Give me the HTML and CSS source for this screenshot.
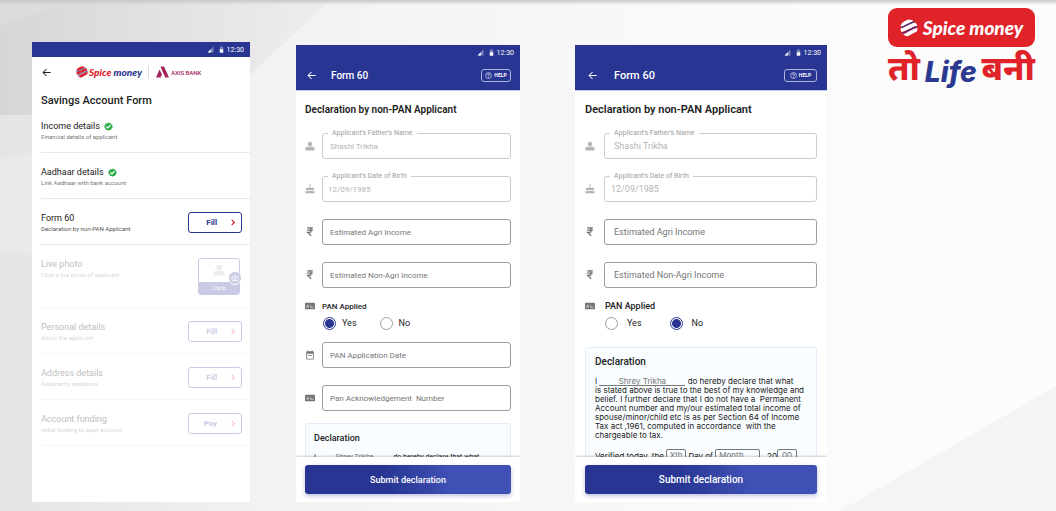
FILE: index.html
```html
<!DOCTYPE html>
<html lang="en">
<head>
    <meta charset="UTF-8">
    <meta name="viewport" content="width=device-width, initial-scale=1.0">
    <title>Spice Money - Savings Account Form</title>
    <link rel="stylesheet" href="styles.css">
</head>
<body>
    <!-- Shared icons -->
    <svg class="sprite" aria-hidden="true">
        <clipPath id="ball"><circle cx="12" cy="12" r="11.500"/></clipPath>
        <symbol id="back" viewBox="0 0 24 24"><path d="M21 11H6.800l6-6L11.400 3.600 3 12l8.400 8.400 1.400-1.400-6-6H21z"/></symbol>
        <symbol id="signal" viewBox="0 0 24 24"><path d="M2 22h20V2z" opacity=".4"/><path d="M2 22h11V11z"/></symbol>
        <symbol id="battery" viewBox="0 0 14 24"><path d="M4 1h6v3h3v7H1V4h3z" opacity=".4"/><path d="M1 11h12v12H1z"/></symbol>
        <symbol id="check" viewBox="0 0 24 24"><path fill="#2fae4a" d="M12 1l3 2 3.600 0 1.400 3.400 3 2-.8 3.600.8 3.600-3 2-1.400 3.400H15l-3 2-3-2H5.400L4 17.600l-3-2L1.800 12 1 8.400l3-2L5.400 3H9z"/><path fill="none" stroke="#fff" stroke-width="3" d="M6.500 12l4 4 7-7.500"/></symbol>
        <symbol id="chevron" viewBox="0 0 12 20"><path fill="none" stroke="currentColor" stroke-width="3.500" d="M2 2l8 8-8 8"/></symbol>
        <symbol id="person" viewBox="0 0 24 24"><circle cx="12" cy="7" r="5.500"/><path d="M1 23v-5c0-3 3-4.500 6-4.500h10c3 0 6 1.500 6 4.500v5z"/></symbol>
        <symbol id="cake" viewBox="0 0 24 24"><path d="M12 6c1.110 0 2-.9 2-2 0-.38-.1-.73-.29-1.030L12 0l-1.710 2.970c-.19.3-.29.65-.29 1.030 0 1.100.9 2 2 2zM18 9h-5V7h-2v2H6c-2 0-4 1.300-4 3v2c2 2 3.500 1 5-.5 2 2 3.500 2 5 0 2 2 3.500 2 5 0 1.500 1.500 3 2.500 5 .5v-2c0-1.700-2-3-4-3zM1 17v5h22v-5c-2.500 1-4.500.5-6-1-2 1.500-3.500 1.500-5 0-2 1.500-3.500 1.500-5 0-1.500 1.500-3.500 2-6 1z"/></symbol>
        <symbol id="rupee" viewBox="0 0 16 24"><path fill="none" stroke="currentColor" stroke-width="2.800" d="M1 2h14M1 7.500h14M1 2h4c8 0 8 11 0 11H2l9 8"/></symbol>
        <symbol id="idcard" viewBox="0 0 30 22"><rect y="1" width="30" height="20" rx="2"/><path fill="#fff" d="M4 16l3-9h2l3 9h-2l-1-2H7l-1 2zM15 7h2v9h-2zM18 13h3v3h-3zM22 13h4v3h-4z" opacity=".7"/></symbol>
        <symbol id="calendar" viewBox="0 0 24 24"><path d="M19 3h-1V1h-2v2H8V1H6v2H5c-1.100 0-2 .9-2 2v16c0 1.100.9 2 2 2h14c1.100 0 2-.9 2-2V5c0-1.100-.9-2-2-2zm0 18H5V9h14zM7 12h10v2H7z"/></symbol>
        <symbol id="help" viewBox="0 0 24 24"><circle cx="12" cy="12" r="10" fill="none" stroke="currentColor" stroke-width="2"/><path fill="none" stroke="currentColor" stroke-width="2.400" d="M8.500 10c0-5 7-4.500 7-.5 0 2.500-3.500 2.500-3.500 5.500M12 16.500V19"/></symbol>
        <symbol id="camera" viewBox="0 0 24 24"><path fill="none" stroke="currentColor" stroke-width="2.500" d="M3 7h4l2-3h6l2 3h4v13H3z"/><circle cx="12" cy="13" r="3.500" fill="none" stroke="currentColor" stroke-width="2.500"/></symbol>
        <symbol id="spice" viewBox="0 0 24 24">
            <g clip-path="url(#ball)" fill="none" stroke-width="5">
                <path stroke="currentColor" d="M-2 8C8 8 12-1 24-1M-2 15.500C9 15.500 14 6 26 6M0 23.500C11 23.500 15 14 26 14"/>
                <path class="stripe" stroke-width="1.600" d="M-2 11.500C8 11.500 13 2.500 26 2.500M-2 19.500C10 19.500 15 10 26 10"/>
            </g>
        </symbol>
        <symbol id="axis" viewBox="0 0 26 24"><path d="M9 1h7l10 22h-8z"/><path d="M7 7l5 10-3 6H0z"/><path d="M11 19c1-2 3-3 5-2l2 6c-2-3-4-4-7-4z" fill="#fff"/></symbol>
    </svg>
    <svg class="backdrop" viewBox="0 0 1056 511" preserveAspectRatio="none" aria-hidden="true">
        <defs>
            <linearGradient id="base" x1="0" y1="0" x2="1" y2="0">
                <stop offset="0" stop-color="#e4e4e4"/>
                <stop offset=".25" stop-color="#f2f2f2"/>
                <stop offset=".7" stop-color="#fafafa"/>
                <stop offset="1" stop-color="#fcfcfc"/>
            </linearGradient>
            <linearGradient id="top" x1="0" y1="0" x2="0" y2="1">
                <stop offset="0" stop-color="#c8c8c8"/>
                <stop offset="1" stop-color="#c8c8c8" stop-opacity="0"/>
            </linearGradient>
            <linearGradient id="corner" x1="0" y1="0" x2="1" y2="0">
                <stop offset="0" stop-color="#d6d6d6"/>
                <stop offset="1" stop-color="#eeeeee"/>
            </linearGradient>
        </defs>
        <rect width="1056" height="511" fill="url(#base)"/>
        <path fill="url(#corner)" d="M0 0h330L250 75 150 115H0z"/>
        <path fill="#dddddd" d="M0 0h78L0 25z"/>
        <path fill="#ececec" d="M0 160l60-15v108H0z" opacity=".7"/>
        <path fill="#f4f4f4" d="M840 511l216-125v125z"/>
        <rect width="1056" height="5" fill="url(#top)"/>
    </svg>

    <main class="stage">
        <!-- Account overview -->
        <section class="phone phone-first">
            <div class="status"><svg><use href="#signal"/></svg><svg class="battery"><use href="#battery"/></svg><span>12:30</span></div>
            <header class="brand-bar">
                <a href="#" class="back" aria-label="Back"><svg><use href="#back"/></svg></a>
                <div class="logo"><svg><use href="#spice"/></svg><span><b>Spice</b> money</span></div>
                <div class="bank"><svg><use href="#axis"/></svg><span>AXIS BANK</span></div>
            </header>
            <h1>Savings Account Form</h1>
            <ul class="steps">
                <li>
                    <div><h2>Income details <svg><use href="#check"/></svg></h2><p>Financial details of applicant</p></div>
                </li>
                <li>
                    <div><h2>Aadhaar details <svg><use href="#check"/></svg></h2><p>Link Aadhaar with bank account</p></div>
                </li>
                <li class="current">
                    <div><h2>Form 60</h2><p>Declaration by non-PAN Applicant</p></div>
                    <button type="button" class="step-btn"><span>Fill</span><svg><use href="#chevron"/></svg></button>
                </li>
                <li class="photo locked">
                    <div><h2>Live photo</h2><p>Click a live photo of applicant</p></div>
                    <button type="button" class="photo-btn">
                        <svg class="face"><use href="#person"/></svg>
                        <span class="camera"><svg><use href="#camera"/></svg></span>
                        <span class="click">Click</span>
                    </button>
                </li>
                <li class="locked">
                    <div><h2>Personal details</h2><p>About the applicant</p></div>
                    <button type="button" class="step-btn"><span>Fill</span><svg><use href="#chevron"/></svg></button>
                </li>
                <li class="locked">
                    <div><h2>Address details</h2><p>Applicant's residence</p></div>
                    <button type="button" class="step-btn"><span>Fill</span><svg><use href="#chevron"/></svg></button>
                </li>
                <li class="locked">
                    <div><h2>Account funding</h2><p>Initial funding to open account</p></div>
                    <button type="button" class="step-btn"><span>Pay</span><svg><use href="#chevron"/></svg></button>
                </li>
            </ul>
        </section>

        <!-- Form 60, PAN applied -->
        <section class="phone">
            <div class="status"><svg><use href="#signal"/></svg><svg class="battery"><use href="#battery"/></svg><span>12:30</span></div>
            <header class="app-bar">
                <a href="#" class="back" aria-label="Back"><svg><use href="#back"/></svg></a>
                <h1>Form 60</h1>
                <button type="button" class="help"><svg><use href="#help"/></svg>HELP</button>
            </header>
            <form>
                <div class="scroll">
                    <h2>Declaration by non-PAN Applicant</h2>
                    <div class="field filled">
                        <svg><use href="#person"/></svg>
                        <div class="box"><label for="father1">Applicant's Father's Name</label><input type="text" id="father1" value="Shashi Trikha" readonly></div>
                    </div>
                    <div class="field filled">
                        <svg><use href="#cake"/></svg>
                        <div class="box date"><label for="dob1">Applicant's Date of Birth</label><input type="text" id="dob1" value="12/09/1985" readonly></div>
                    </div>
                    <div class="field">
                        <svg><use href="#rupee"/></svg>
                        <div class="box"><input type="text" placeholder="Estimated Agri Income" aria-label="Estimated Agri Income"></div>
                    </div>
                    <div class="field">
                        <svg><use href="#rupee"/></svg>
                        <div class="box"><input type="text" placeholder="Estimated Non-Agri Income" aria-label="Estimated Non-Agri Income"></div>
                    </div>
                    <div class="pan"><svg><use href="#idcard"/></svg><span>PAN Applied</span></div>
                    <div class="choices">
                        <label><input type="radio" name="pan1" checked>Yes</label>
                        <label><input type="radio" name="pan1">No</label>
                    </div>
                    <div class="field">
                        <svg><use href="#calendar"/></svg>
                        <div class="box"><input type="text" placeholder="PAN Application Date" aria-label="PAN Application Date"></div>
                    </div>
                    <div class="field">
                        <svg><use href="#idcard"/></svg>
                        <div class="box"><input type="text" placeholder="Pan Acknowledgement  Number" aria-label="Pan Acknowledgement Number"></div>
                    </div>
                    <div class="declaration">
                        <h3>Declaration</h3>
                        <p>I <input type="text" class="name" value="Shrey Trikha" aria-label="Name"> do hereby declare that what</p>
                    </div>
                </div>
                <div class="actions"><button type="button" class="submit">Submit declaration</button></div>
            </form>
        </section>

        <!-- Form 60, PAN not applied -->
        <section class="phone phone-wide">
            <div class="status"><svg><use href="#signal"/></svg><svg class="battery"><use href="#battery"/></svg><span>12:30</span></div>
            <header class="app-bar">
                <a href="#" class="back" aria-label="Back"><svg><use href="#back"/></svg></a>
                <h1>Form 60</h1>
                <button type="button" class="help"><svg><use href="#help"/></svg>HELP</button>
            </header>
            <form>
                <div class="scroll">
                    <h2>Declaration by non-PAN Applicant</h2>
                    <div class="field filled">
                        <svg><use href="#person"/></svg>
                        <div class="box"><label for="father2">Applicant's Father's Name</label><input type="text" id="father2" value="Shashi Trikha" readonly></div>
                    </div>
                    <div class="field filled">
                        <svg><use href="#cake"/></svg>
                        <div class="box date"><label for="dob2">Applicant's Date of Birth</label><input type="text" id="dob2" value="12/09/1985" readonly></div>
                    </div>
                    <div class="field">
                        <svg><use href="#rupee"/></svg>
                        <div class="box"><input type="text" placeholder="Estimated Agri Income" aria-label="Estimated Agri Income"></div>
                    </div>
                    <div class="field">
                        <svg><use href="#rupee"/></svg>
                        <div class="box"><input type="text" placeholder="Estimated Non-Agri Income" aria-label="Estimated Non-Agri Income"></div>
                    </div>
                    <div class="pan"><svg><use href="#idcard"/></svg><span>PAN Applied</span></div>
                    <div class="choices">
                        <label><input type="radio" name="pan2">Yes</label>
                        <label><input type="radio" name="pan2" checked>No</label>
                    </div>
                    <div class="declaration">
                        <h3>Declaration</h3>
                        <p>I <input type="text" class="name" value="Shrey Trikha" aria-label="Name"> do hereby declare that what<br>
                        is stated above is true to the best of my knowledge and<br>
                        belief. I further declare that I do not have a&nbsp; Permanent<br>
                        Account number and my/our estimated total income of<br>
                        spouse/minor/child etc is as per Section 64 of Income<br>
                        Tax act ,1961, computed in accordance&nbsp; with the<br>
                        chargeable to tax.</p>
                        <p class="verified">Verified today, the <input type="text" class="day" value="Xth" aria-label="Day"> Day of <input type="text" class="month" value="Month" aria-label="Month"> , 20<input type="text" class="day" value="00" aria-label="Year"></p>
                    </div>
                </div>
                <div class="actions"><button type="button" class="submit">Submit declaration</button></div>
            </form>
        </section>

        <aside class="brand">
            <div class="badge"><svg><use href="#spice"/></svg><span>Spice money</span></div>
            <p class="tagline" lang="hi">तो <em>Life</em> बनी</p>
        </aside>
    </main>
</body>
</html>
```
FILE: styles.css
```css
* {
    box-sizing: border-box;
}

body {
    margin: 0;
    font-family: Roboto, "Liberation Sans", sans-serif;
    color: #222;
    background: #f6f6f6;
}

h1, h2, h3, p, ul {
    margin: 0;
    padding: 0;
}

button, input {
    font-family: inherit;
    margin: 0;
}

svg {
    display: block;
    fill: currentColor;
    flex: none;
}

.sprite {
    position: absolute;
    width: 0;
    height: 0;
}

.backdrop {
    position: absolute;
    top: 0;
    left: 0;
    width: 100%;
    height: 100%;
}

.stage {
    position: relative;
    height: 100vh;
    display: grid;
    grid-template-columns: 218fr 224fr 261fr 162fr;
    grid-template-rows: minmax(0, 1fr);
    column-gap: 46px;
    padding: 0 21px 9px 32px;
}

/* phones */
.phone {
    display: flex;
    flex-direction: column;
    margin-top: 45px;
    background: #fff;
    min-width: 0;
    overflow: hidden;
}

.phone-first {
    margin-top: 42px;
}

.phone-wide {
    margin-left: 9px;
}

.status {
    display: flex;
    flex: none;
    justify-content: flex-end;
    align-items: center;
    height: 15px;
    padding-right: 6px;
    background: #283593;
    color: #fff;
    font-size: 7px;
}

.status svg {
    width: 7px;
    height: 7px;
    margin-right: 5px;
}

.status .battery {
    width: 5px;
    height: 7px;
    margin-right: 3px;
}

.back {
    color: inherit;
}

.back svg {
    width: 11px;
    height: 11px;
}

/* account overview */
.brand-bar {
    display: flex;
    align-items: center;
    height: 30px;
    padding-left: 9px;
}

.logo {
    display: flex;
    align-items: center;
    gap: 1px;
    margin-left: 24px;
    padding-right: 6px;
    border-right: 1px solid #ddd;
    color: #2b3990;
    font-family: Lato, sans-serif;
    font-size: 10px;
    line-height: 10px;
    font-weight: 900;
    font-style: italic;
}

.logo svg {
    width: 12px;
    height: 12px;
    color: #e02229;
}

.logo b {
    color: #e02229;
}

.stripe {
    stroke: #2b3990;
}

.bank {
    display: flex;
    align-items: center;
    gap: 2px;
    margin-left: 7px;
    color: #a5235b;
    font-size: 6px;
    font-weight: 500;
}

.bank svg {
    width: 13px;
    height: 12px;
}

.phone-first h1 {
    margin: 7px 0 0 9px;
    font-size: 11px;
    line-height: 14px;
    font-weight: 500;
}

.steps {
    list-style: none;
    margin: 0 0 0 9px;
}

.steps li {
    display: flex;
    justify-content: space-between;
    align-items: flex-start;
    height: 46px;
    padding: 13px 8px 0 0;
    border-bottom: 1px solid #e8e8e8;
}

.steps li:first-child {
    height: 45px;
    padding-top: 12px;
}

.steps h2 {
    display: flex;
    align-items: center;
    gap: 4px;
    font-size: 9px;
    line-height: 12px;
    font-weight: 400;
}

.steps h2 svg {
    width: 9px;
    height: 9px;
}

.steps p {
    font-size: 6px;
    line-height: 9px;
    color: #777;
}

.steps .current p {
    color: #555;
}

.steps .photo {
    height: 63px;
}

.step-btn {
    display: flex;
    align-items: center;
    justify-content: flex-end;
    gap: 14px;
    width: 54px;
    height: 21px;
    padding: 0 6px;
    background: #fff;
    border: 1px solid #283593;
    border-radius: 3px;
    color: #283593;
    font-size: 8px;
    font-weight: 700;
}

.step-btn svg {
    width: 4px;
    height: 7px;
    color: #e02229;
}

.steps .locked {
    border-color: #f6f6f6;
}

.locked h2, .locked p {
    opacity: .3;
}

.locked button {
    opacity: .25;
}

.photo-btn {
    position: relative;
    display: flex;
    flex-direction: column;
    align-items: center;
    justify-content: space-between;
    width: 42px;
    height: 37px;
    margin-right: 2px;
    padding: 5px 0 0;
    background: #fff;
    border: 1px solid #283593;
    border-radius: 3px;
    color: #bbb;
}

.face {
    width: 12px;
    height: 12px;
}

.camera {
    position: absolute;
    right: -3px;
    top: 12px;
    display: grid;
    place-items: center;
    width: 14px;
    height: 14px;
    background: #283593;
    border: 1px solid #fff;
    border-radius: 50%;
    color: #fff;
}

.camera svg {
    width: 8px;
    height: 8px;
}

.click {
    width: 100%;
    background: #283593;
    color: #fff;
    font-size: 6px;
    line-height: 12px;
}

/* form 60 */
.app-bar {
    display: flex;
    flex: none;
    align-items: center;
    height: 31px;
    padding: 0 9px 0 10px;
    background: #283593;
    border-bottom: 1px solid #c5cae9;
    color: #fff;
}

.app-bar h1 {
    flex: 1;
    margin-left: 14px;
    font-size: 10px;
    font-weight: 500;
}

.help {
    display: flex;
    align-items: center;
    justify-content: center;
    gap: 2px;
    width: 30px;
    height: 13px;
    padding: 0;
    background: none;
    border: 1px solid #aeb4dc;
    border-radius: 3px;
    color: #fff;
    font-size: 5px;
    font-weight: 700;
}

.help svg {
    width: 7px;
    height: 7px;
}

form {
    display: flex;
    flex: 1;
    flex-direction: column;
    min-height: 0;
}

.scroll {
    flex: 1;
    min-height: 0;
    overflow: hidden;
    padding: 12px 9px 0;
}

.scroll h2 {
    font-size: 10px;
    line-height: 14px;
    font-weight: 600;
    margin-bottom: 16px;
}

.field {
    display: flex;
    align-items: center;
    margin-bottom: 17px;
    color: #757575;
}

.field > svg {
    width: 10px;
    height: 10px;
    margin-right: 7px;
}

.box {
    position: relative;
    flex: 1;
    min-width: 0;
}

.box input {
    display: block;
    width: 100%;
    height: 26px;
    padding: 0 7px;
    background: #fff;
    border: 1px solid #9e9e9e;
    border-radius: 3px;
    color: #616161;
    font-size: 8px;
}

.box input::placeholder {
    color: #757575;
    opacity: 1;
}

.box label {
    position: absolute;
    left: 6px;
    top: -4px;
    padding: 0 4px;
    background: #fff;
    color: #9e9e9e;
    font-size: 7px;
    line-height: 8px;
}

.filled {
    color: #b5b5b5;
}

.box input:read-only {
    border-color: #ccc;
    color: #b5b5b5;
}

.date input {
    padding-left: 5px;
}

.pan {
    display: flex;
    align-items: center;
    gap: 7px;
    height: 12px;
    margin-top: -5px;
    color: #222;
    font-size: 8px;
    font-weight: 500;
}

.pan svg {
    width: 10px;
    height: 8px;
    color: #757575;
}

.choices {
    display: flex;
    gap: 23px;
    margin: 5px 0 12px 18px;
    font-size: 9px;
    line-height: 13px;
}

.choices label {
    display: flex;
    align-items: center;
    gap: 6px;
}

.choices input {
    appearance: none;
    width: 13px;
    height: 13px;
    border: 1px solid #9e9e9e;
    border-radius: 50%;
    background: #fff;
}

.choices input:checked {
    border-color: #283593;
    background: radial-gradient(circle, #283593 4px, #fff 5px);
}

.declaration {
    margin-top: -5px;
    padding: 8px;
    background: #f9fdff;
    border: 1px solid #e3eefa;
    border-radius: 2px;
}

.declaration h3 {
    font-size: 9px;
    line-height: 12px;
    font-weight: 500;
}

.declaration p {
    margin-top: 9px;
    font-size: 7px;
    line-height: 9px;
    white-space: nowrap;
}

.declaration input {
    height: 9px;
    padding: 0;
    background: none;
    border: 1px solid #777;
    border-radius: 2px;
    color: #777;
    font-size: 7px;
    line-height: 8px;
    text-align: center;
    vertical-align: bottom;
}

.declaration .name {
    width: 74px;
    border-width: 0 0 1px;
    border-radius: 0;
}

.declaration .day {
    width: 20px;
    height: 12px;
}

.declaration .month {
    width: 45px;
    height: 12px;
    padding-left: 3px;
    text-align: left;
}

.actions {
    position: relative;
    flex: none;
    padding: 8px 9px;
    background: #fff;
    box-shadow: 0 -1px 2px rgba(0, 0, 0, .2);
}

.submit {
    display: block;
    width: 100%;
    height: 29px;
    background: linear-gradient(75deg, #283593 40%, #3f51b5 70%);
    border: none;
    border-radius: 3px;
    box-shadow: 0 2px 4px rgba(40, 53, 147, .3);
    color: #fff;
    font-size: 9px;
    font-weight: 500;
}

/* the last phone is wider and its text is a size up */
.phone-wide .scroll, .phone-wide .actions {
    padding-left: 10px;
    padding-right: 10px;
}

.phone-wide .app-bar {
    padding: 0 10px 0 12px;
}

.phone-wide .help {
    width: 33px;
}

.phone-wide .app-bar h1 {
    margin-left: 16px;
    font-size: 11px;
}

.phone-wide .scroll h2 {
    font-size: 11px;
}

.phone-wide .submit {
    font-size: 10px;
}

.phone-wide .field > svg {
    margin-right: 9px;
}

.phone-wide .box input {
    padding-left: 9px;
    font-size: 9px;
}

.phone-wide .date input {
    padding-left: 6px;
}

.phone-wide .pan {
    gap: 10px;
    font-size: 9px;
}

.phone-wide .choices {
    gap: 28px;
    margin: 5px 0 17px 20px;
}

.phone-wide .choices label {
    gap: 9px;
}

.phone-wide .declaration {
    margin-top: 0;
    padding-left: 9px;
}

.phone-wide .declaration h3 {
    font-size: 10px;
}

.phone-wide .declaration p, .phone-wide .declaration input {
    font-family: Inter, Roboto, sans-serif;
    font-size: 8px;
}

.phone-wide .name {
    width: 86px;
}

/* brand corner */
.brand {
    margin: 8px 0 0 15px;
}

.badge {
    display: flex;
    align-items: center;
    justify-content: center;
    gap: 5px;
    height: 39px;
    background: #e02229;
    border-radius: 9px;
    color: #fff;
    font-family: Lato, sans-serif;
    font-size: 19px;
    font-weight: 900;
    font-style: italic;
}

.badge svg {
    width: 18px;
    height: 18px;
}

.tagline {
    display: flex;
    align-items: center;
    justify-content: space-between;
    color: #e02229;
    font-family: "Noto Sans Devanagari", "Noto Sans", sans-serif;
    font-size: 34px;
    line-height: 50px;
    font-weight: 800;
}

.tagline em {
    color: #2b3990;
    font-family: Inter, sans-serif;
    font-size: 28px;
    font-weight: 800;
}
```
